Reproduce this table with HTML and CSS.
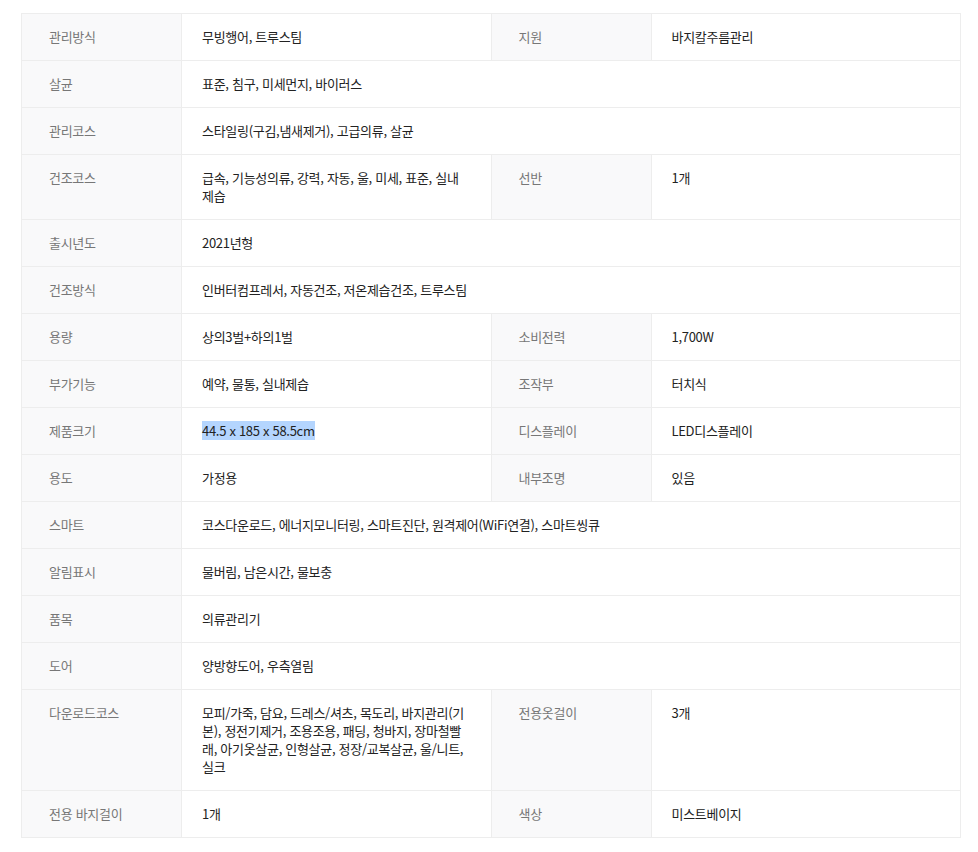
FILE: index.html
```html
<!DOCTYPE html>
<html lang="ko">
<head>
  <meta charset="UTF-8">
  <meta name="viewport" content="width=device-width, initial-scale=1.0">
  <title>제품 상세 정보</title>
  <link rel="stylesheet" href="styles.css">
</head>
<body>
  <div class="spec-wrap">
    <table class="spec-table">
      <colgroup>
        <col class="col-label">
        <col class="col-value">
        <col class="col-label">
        <col class="col-value">
      </colgroup>
      <tbody>
        <tr>
          <th>관리방식</th>
          <td>무빙행어, 트루스팀</td>
          <th>지원</th>
          <td>바지칼주름관리</td>
        </tr>
        <tr>
          <th>살균</th>
          <td colspan="3">표준, 침구, 미세먼지, 바이러스</td>
        </tr>
        <tr>
          <th>관리코스</th>
          <td colspan="3">스타일링(구김,냄새제거), 고급의류, 살균</td>
        </tr>
        <tr>
          <th>건조코스</th>
          <td>급속, 기능성의류, 강력, 자동, 울, 미세, 표준, 실내제습</td>
          <th>선반</th>
          <td>1개</td>
        </tr>
        <tr>
          <th>출시년도</th>
          <td colspan="3">2021년형</td>
        </tr>
        <tr>
          <th>건조방식</th>
          <td colspan="3">인버터컴프레서, 자동건조, 저온제습건조, 트루스팀</td>
        </tr>
        <tr>
          <th>용량</th>
          <td>상의3벌+하의1벌</td>
          <th>소비전력</th>
          <td>1,700W</td>
        </tr>
        <tr>
          <th>부가기능</th>
          <td>예약, 물통, 실내제습</td>
          <th>조작부</th>
          <td>터치식</td>
        </tr>
        <tr>
          <th>제품크기</th>
          <td><span class="selected">44.5 x 185 x 58.5cm</span></td>
          <th>디스플레이</th>
          <td>LED디스플레이</td>
        </tr>
        <tr>
          <th>용도</th>
          <td>가정용</td>
          <th>내부조명</th>
          <td>있음</td>
        </tr>
        <tr>
          <th>스마트</th>
          <td colspan="3">코스다운로드, 에너지모니터링, 스마트진단, 원격제어(WiFi연결), 스마트씽큐</td>
        </tr>
        <tr>
          <th>알림표시</th>
          <td colspan="3">물버림, 남은시간, 물보충</td>
        </tr>
        <tr>
          <th>품목</th>
          <td colspan="3">의류관리기</td>
        </tr>
        <tr>
          <th>도어</th>
          <td colspan="3">양방향도어, 우측열림</td>
        </tr>
        <tr>
          <th>다운로드코스</th>
          <td>모피/가죽, 담요, 드레스/셔츠, 목도리, 바지관리(기본), 정전기제거, 조용조용, 패딩, 청바지, 장마철빨래, 아기옷살균, 인형살균, 정장/교복살균, 울/니트, 실크</td>
          <th>전용옷걸이</th>
          <td>3개</td>
        </tr>
        <tr>
          <th>전용 바지걸이</th>
          <td>1개</td>
          <th>색상</th>
          <td>미스트베이지</td>
        </tr>
      </tbody>
    </table>
  </div>
</body>
</html>
```

FILE: styles.css
```css
/* General Styles */
body {
  margin: 0;
  padding: 0;
  background-color: #ffffff;
  font-family: "Noto Sans CJK KR", "Noto Sans", sans-serif;
  color: #222;
}

.spec-wrap {
  padding: 13px 17px 0 21px;
}

/* Spec Table */
.spec-table {
  width: 940px;
  border-collapse: collapse;
  table-layout: fixed;
  border: 1px solid #ededed;
  font-size: 13px;
  line-height: 18px;
  letter-spacing: -0.3px;
}

.col-label {
  width: 160px;
}

.spec-table th,
.spec-table td {
  border: 1px solid #ededed;
  padding: 14px 23px 14px 20px;
  text-align: left;
  vertical-align: top;
  word-break: normal;
}

.spec-table th {
  background-color: #f9f9fa;
  color: #777;
  font-weight: normal;
  padding-left: 27px;
}

.spec-table td {
  color: #222;
}

.selected {
  background-color: #b4d5fe;
}
```
